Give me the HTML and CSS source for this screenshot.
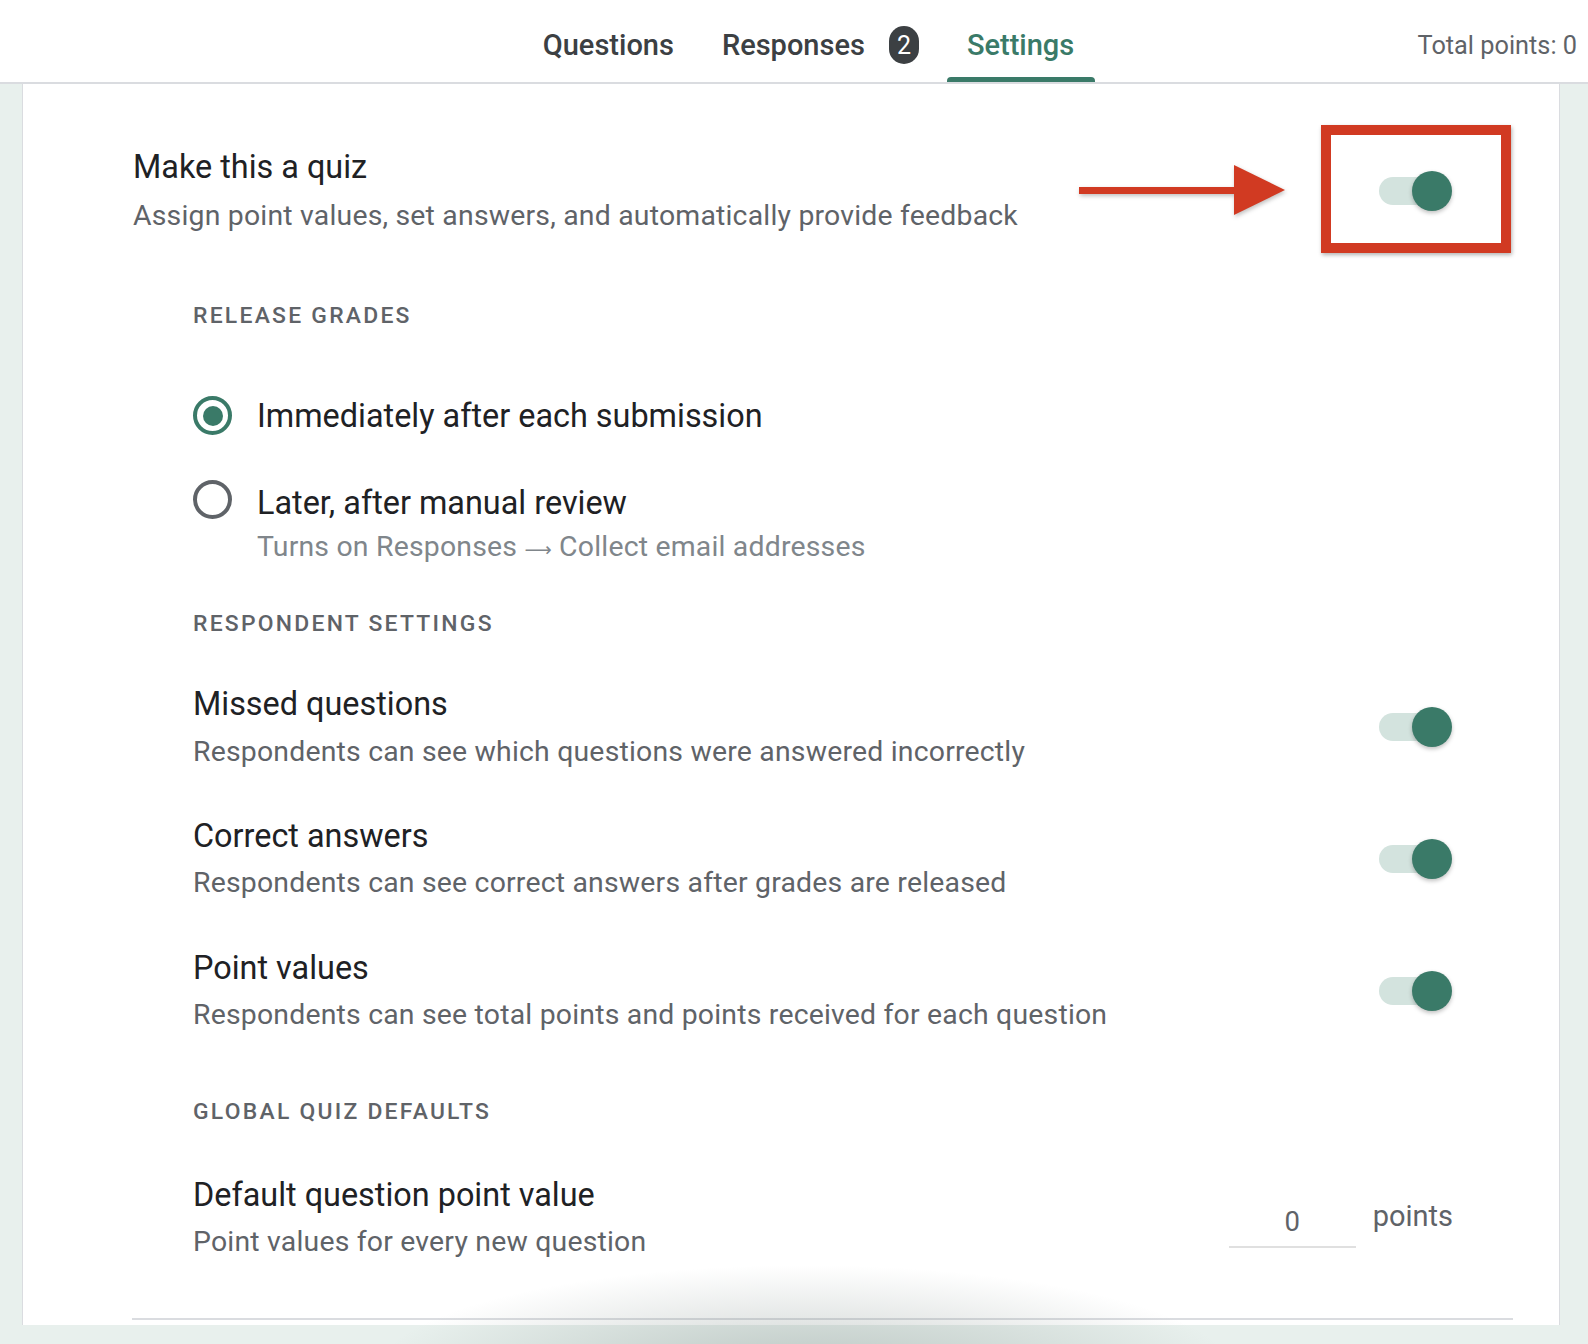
FILE: index.html
```html
<!DOCTYPE html>
<html lang="en">
<head>
  <meta charset="UTF-8" />
  <title>Quiz settings</title>
  <link rel="stylesheet" href="styles.css">
</head>
<body>
  <header class="topbar">
    <nav class="tabs">
      <div class="tab">Questions</div>
      <div class="tab">Responses <span class="badge">2</span></div>
      <div class="tab active">Settings</div>
    </nav>
    <div class="total">Total points: 0</div>
  </header>

  <main class="page">
    <section class="card">
      <div class="row quiz-row">
        <div class="text">
          <div class="title">Make this a quiz</div>
          <div class="sub">Assign point values, set answers, and automatically provide feedback</div>
        </div>
        <div class="toggle"><span class="knob"></span></div>
      </div>

      <!-- annotation -->
      <div class="arrow">
        <span class="arrow-line"></span>
        <span class="arrow-head"></span>
      </div>
      <div class="highlight"></div>

      <div class="section">
        <div class="heading">Release grades</div>

        <label class="radio-row first">
          <span class="radio checked"></span>
          <span class="radio-label">Immediately after each submission</span>
        </label>
        <label class="radio-row second">
          <span class="radio"></span>
          <span class="radio-text">
            <span class="radio-label">Later, after manual review</span>
            <span class="hint">Turns on Responses <span class="glyph">⟶</span> Collect email addresses</span>
          </span>
        </label>

        <div class="heading respondent">Respondent settings</div>

        <div class="row setting">
          <div class="text">
            <div class="title">Missed questions</div>
            <div class="sub">Respondents can see which questions were answered incorrectly</div>
          </div>
          <div class="toggle"><span class="knob"></span></div>
        </div>
        <div class="row setting">
          <div class="text">
            <div class="title">Correct answers</div>
            <div class="sub">Respondents can see correct answers after grades are released</div>
          </div>
          <div class="toggle"><span class="knob"></span></div>
        </div>
        <div class="row setting">
          <div class="text">
            <div class="title">Point values</div>
            <div class="sub">Respondents can see total points and points received for each question</div>
          </div>
          <div class="toggle"><span class="knob"></span></div>
        </div>

        <div class="heading global">Global quiz defaults</div>

        <div class="row setting defaults">
          <div class="text">
            <div class="title">Default question point value</div>
            <div class="sub">Point values for every new question</div>
          </div>
          <div class="points">
            <div class="points-input">0</div>
            <span class="points-label">points</span>
          </div>
        </div>
      </div>

      <div class="divider"></div>
    </section>
    <div class="blob"></div>
  </main>
</body>
</html>
```

FILE: styles.css
```css
:root {
  --green: #3a7a68;
  --track: #d3e3de;
  --text: #202124;
  --muted: #5f6368;
  --light: #80868b;
  --line: #dadce0;
  --red: #d13a22;
}

html, body {
  height: 1344px;
  overflow: hidden;
}

body {
  margin: 0;
  font-family: Roboto, 'Noto Sans', sans-serif;
  color: var(--text);
  background: #e8f0ed;
}

.topbar {
  position: relative;
  height: 82px;
  background: white;
  border-bottom: 2px solid var(--line);
  display: flex;
  justify-content: center;
}

.tabs {
  display: flex;
  gap: 8px;
  margin-left: 30px;
}

.tab {
  display: flex;
  align-items: center;
  padding: 8px 20px 0;
  font-size: 29px;
  font-weight: 500;
  color: #3c4043;
  position: relative;
}

.tab.active {
  color: var(--green);
  padding-right: 21px;
}

.tab.active::after {
  content: "";
  position: absolute;
  left: 0;
  right: 0;
  bottom: 0;
  height: 5px;
  background: var(--green);
  border-radius: 4px 4px 0 0;
}

.badge {
  display: inline-flex;
  align-items: center;
  justify-content: center;
  width: 30px;
  height: 38px;
  margin-left: 24px;
  border-radius: 15px;
  background: #3c4043;
  color: white;
  font-size: 25px;
  font-weight: 400;
}

.total {
  position: absolute;
  right: 11px;
  top: 31px;
  font-size: 25.3px;
  color: var(--muted);
}

.page {
  position: relative;
  height: 1260px;
  overflow: hidden;
}

.card {
  position: relative;
  margin-left: 22px;
  width: 1538px;
  background: white;
  border-left: 1px solid var(--line);
  border-right: 1px solid var(--line);
  padding: 63px 0 5px 110px;
  box-sizing: border-box;
}

.row {
  display: flex;
  align-items: center;
  justify-content: space-between;
  padding-right: 106px;
}

.title {
  font-size: 32.4px;
  line-height: 40px;
}

.sub {
  font-size: 28.4px;
  line-height: 36px;
  margin-top: 11px;
  color: var(--muted);
  letter-spacing: 0.2px;
}

.toggle {
  position: relative;
  width: 60px;
  height: 28px;
  margin-right: 14px;
  border-radius: 14px;
  background: var(--track);
}

.knob {
  position: absolute;
  right: -13px;
  top: -6px;
  width: 40px;
  height: 40px;
  border-radius: 50%;
  background: var(--green);
  box-shadow: 0 2px 4px rgba(0,0,0,0.25);
}

.section {
  padding-left: 60px;
}

.heading {
  margin-top: 67px;
  font-size: 22.9px;
  line-height: 30px;
  font-weight: 500;
  letter-spacing: 2.25px;
  text-transform: uppercase;
  color: var(--muted);
}

.radio-row {
  display: flex;
  align-items: flex-start;
  gap: 25px;
}

.radio-row.first {
  margin-top: 65px;
}

.radio-row.second {
  margin-top: 47px;
}

.radio {
  flex: none;
  width: 39px;
  height: 39px;
  margin-top: -3px;
  border: 4px solid var(--muted);
  border-radius: 50%;
  box-sizing: border-box;
  position: relative;
}

.radio-row.first .radio {
  margin-top: 0;
}

.radio.checked {
  border-color: var(--green);
}

.radio.checked::after {
  content: "";
  position: absolute;
  left: 5.5px;
  top: 5.5px;
  width: 20px;
  height: 20px;
  border-radius: 50%;
  background: var(--green);
}

.radio-text {
  display: flex;
  flex-direction: column;
}

.radio-label {
  font-size: 32.4px;
  line-height: 40px;
}

.hint {
  margin-top: 6px;
  font-size: 28.4px;
  line-height: 36px;
  color: var(--light);
  letter-spacing: 0.2px;
}

.glyph {
  font-family: 'DejaVu Sans', sans-serif;
  font-size: 19px;
  line-height: 1;
}

.heading.respondent {
  margin-top: 44px;
}

.setting {
  margin-top: 47px;
}

.heading.respondent + .setting {
  margin-top: 45px;
}

.heading.respondent + .setting + .setting {
  margin-top: 46px;
}

.heading.global {
  margin-top: 64px;
}

.setting .sub {
  margin-top: 9px;
}

.heading.respondent + .setting .sub {
  margin-top: 10px;
}

.setting.defaults {
  margin-top: 48px;
}

.points {
  display: flex;
  align-items: center;
  gap: 17px;
}

.points-input {
  width: 127px;
  height: 54px;
  margin-top: 4px;
  line-height: 60px;
  text-align: center;
  font-size: 27.5px;
  color: var(--muted);
  border-bottom: 2px solid #e0e0e0;
}

.points-label {
  font-size: 29px;
  color: var(--muted);
  margin-bottom: 3px;
}

.divider {
  margin: 58px 46px 0 -1px;
  height: 2px;
  background: var(--line);
}

/* red annotation over the quiz toggle */
.arrow {
  position: absolute;
  left: 1056px;
  top: 81px;
  width: 210px;
  height: 51px;
  filter: drop-shadow(1px 2px 2px rgba(0,0,0,0.25));
}

.arrow-line {
  position: absolute;
  left: 0;
  top: 22px;
  width: 157px;
  height: 7px;
  background: var(--red);
}

.arrow-head {
  position: absolute;
  left: 155px;
  top: 0;
  width: 0;
  height: 0;
  border-top: 25.5px solid transparent;
  border-bottom: 25.5px solid transparent;
  border-left: 51px solid var(--red);
}

.highlight {
  position: absolute;
  left: 1298px;
  top: 41px;
  width: 190px;
  height: 128px;
  border: 10px solid var(--red);
  box-sizing: border-box;
  box-shadow: 1px 2px 4px rgba(0,0,0,0.3);
}

.blob {
  position: absolute;
  left: 370px;
  top: 1180px;
  width: 870px;
  height: 220px;
  border-radius: 50%;
  background: radial-gradient(ellipse at center, rgba(120,135,130,0.4), rgba(120,135,130,0) 70%);
  pointer-events: none;
}
```
